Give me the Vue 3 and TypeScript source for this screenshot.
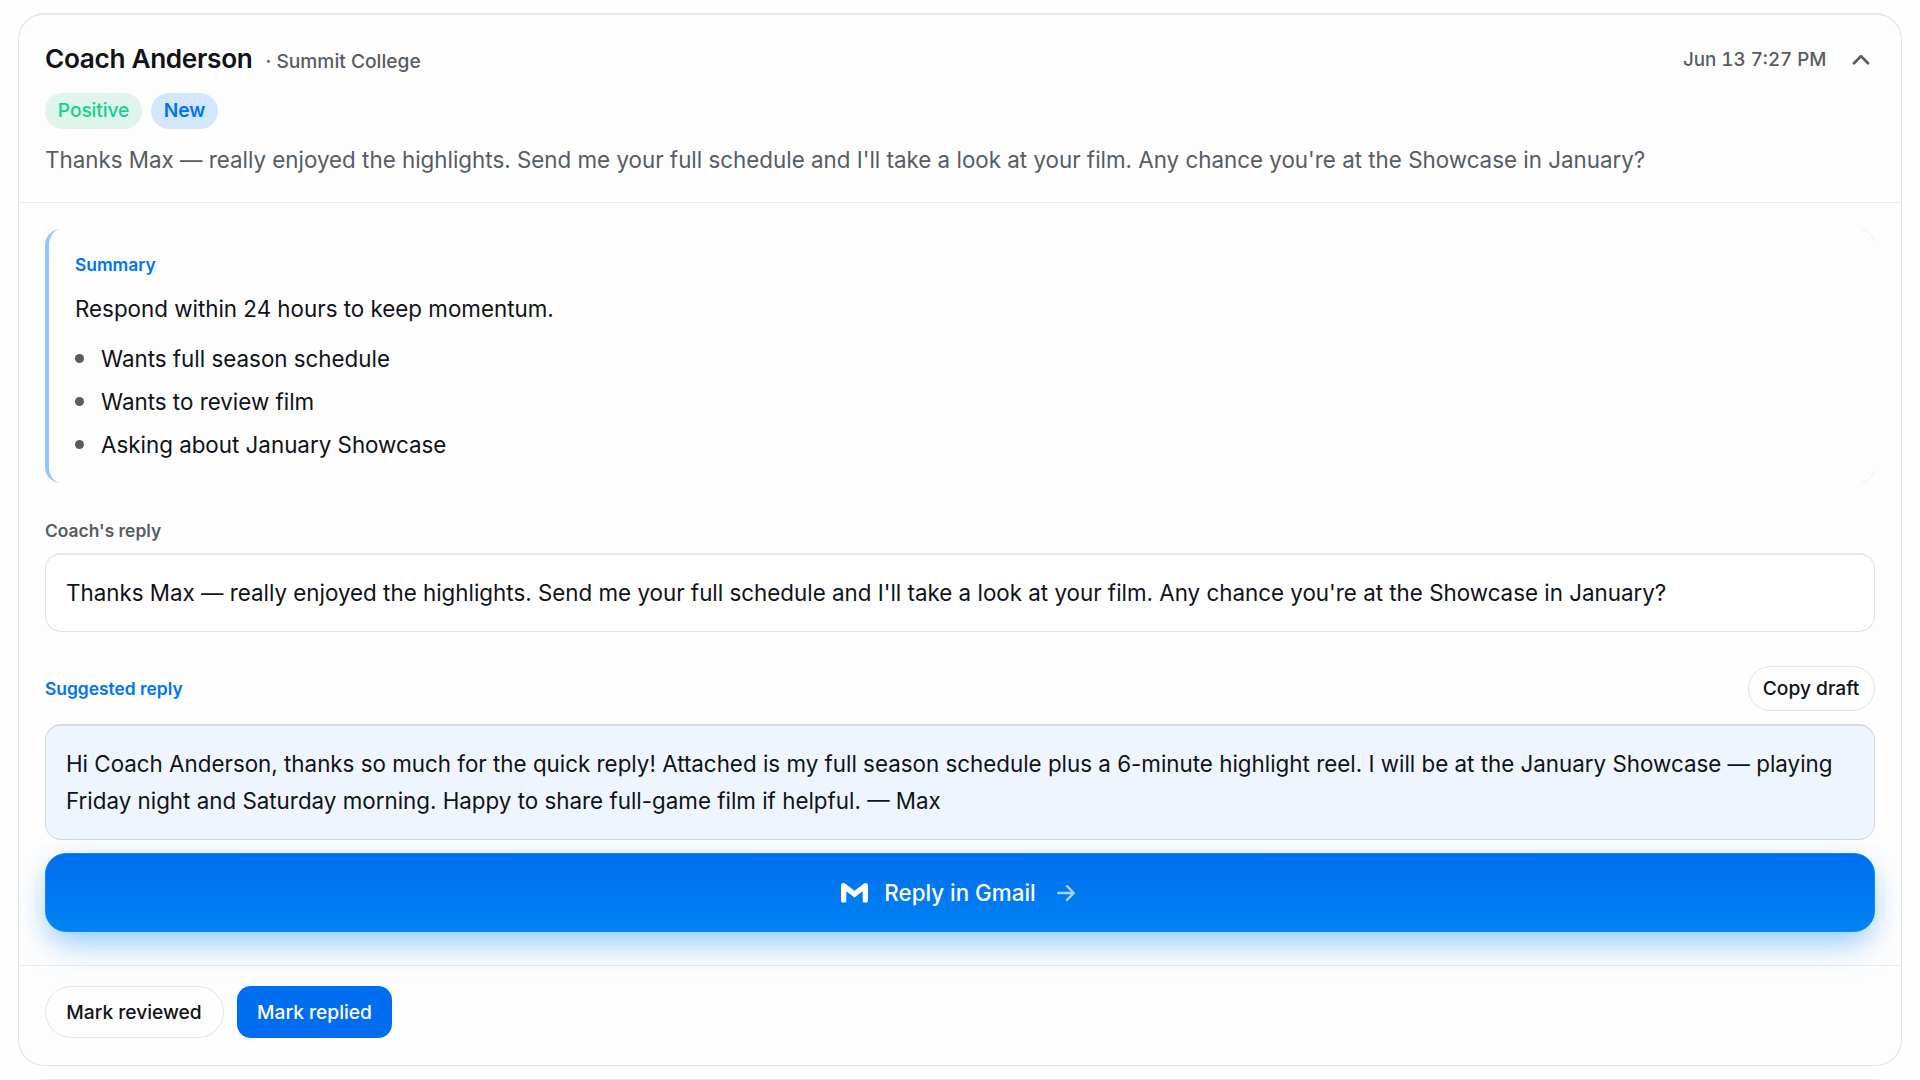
<script setup lang="ts">
interface Badge { label: string; tone: string }
const message = "Thanks Max — really enjoyed the highlights. Send me your full schedule and I'll take a look at your film. Any chance you're at the Showcase in January?"
const badges: Badge[] = [
  { label: 'Positive', tone: 'positive' },
  { label: 'New', tone: 'new' },
]
const points: string[] = ['Wants full season schedule', 'Wants to review film', 'Asking about January Showcase']
</script>

<template>
  <main class="page">
    <article class="card">
      <header class="head">
        <div class="title-row">
          <h2 class="name">Coach Anderson</h2>
          <span class="school">· Summit College</span>
          <time class="time">Jun 13 7:27 PM</time>
          <svg class="chevron" viewBox="0 0 28 28" fill="none" stroke="currentColor" stroke-width="2.7" stroke-linecap="round" stroke-linejoin="round"><path d="m7 17.2 7-7.1 7 7.1" /></svg>
        </div>
        <div class="badges">
          <span v-for="b in badges" :key="b.label" class="badge" :class="b.tone">{{ b.label }}</span>
        </div>
        <p class="preview">{{ message }}</p>
      </header>
      <section class="body">
        <div class="summary">
          <h3 class="label blue">Summary</h3>
          <p class="lead">Respond within 24 hours to keep momentum.</p>
          <ul class="points">
            <li v-for="p in points" :key="p"><i class="dot"></i><span>{{ p }}</span></li>
          </ul>
          <svg class="arc top" viewBox="0 0 14 13" fill="none"><path d="M0 .5A15.5 15.5 0 0 1 13.3 12.5" stroke="#e6f2fe" /></svg>
          <svg class="arc bottom" viewBox="0 0 14 13" fill="none"><path d="M0 12.5A15.5 15.5 0 0 0 13.3 .5" stroke="#e6f2fe" /></svg>
        </div>
        <h3 class="label reply-label">Coach's reply</h3>
        <div class="box"><p>{{ message }}</p></div>
        <div class="suggest-row">
          <h3 class="label blue">Suggested reply</h3>
          <button class="pill copy">Copy draft</button>
        </div>
        <div class="box draft">
          <p>Hi Coach Anderson, thanks so much for the quick reply! Attached is my full season schedule plus a 6-minute highlight reel. I will be at the January Showcase — playing Friday night and Saturday morning. Happy to share full-game film if helpful. — Max</p>
        </div>
        <button class="gmail">
          <svg class="gmail-icon" viewBox="0 0 27 20" fill="#fff"><path d="M2.4 0C3.1 0 3.7.3 4.3.8L13.5 7.7 22.7.8C23.3.3 23.9 0 24.6 0 26 0 27 1 27 2.4V17.8C27 19 26.4 19.6 25.2 19.6H23.4C22.3 19.6 21.7 19 21.7 17.9V8.2L13.5 14.5 5.3 8.2V17.9C5.3 19 4.7 19.6 3.6 19.6H1.8C.6 19.6 0 19 0 17.8V2.4C0 1 1 0 2.4 0Z" /></svg>
          <span>Reply in Gmail</span>
          <svg class="arrow" viewBox="0 0 18 16" fill="none" stroke="currentColor" stroke-width="2.4" stroke-linecap="round" stroke-linejoin="round"><path d="M1.2 8H16.8M10 1.2l6.8 6.8-6.8 6.8" /></svg>
        </button>
      </section>
      <footer class="foot">
        <button class="pill reviewed">Mark reviewed</button>
        <button class="replied">Mark replied</button>
      </footer>
    </article>
    <div class="card next"></div>
  </main>
</template>

<style>
html, body { margin: 0; background: #fefefe; }
body { overflow: hidden; }
</style>

<style scoped>
* { box-sizing: border-box; }
.page { height: 1080px; overflow: hidden; padding: 13px 18px 0 18px; font-family: Inter, "Liberation Sans", sans-serif; color: #101318; font-size: 22.37px; }
h2, h3, p, ul { margin: 0; padding: 0; font-weight: 400; }
button { font: inherit; margin: 0; padding: 0; }
.card { height: 1053px; border: 1px solid #e2e3e4; border-top: 2px solid #e6e7e8; border-radius: 26px; background: #fdfdfd; }
.next { height: 100px; margin-top: 13px; }
.head { height: 188px; padding: 25px 26px 0; border-bottom: 1px solid #ebebec; color: #575c63; }
.title-row { display: flex; height: 38px; align-items: center; }
.name { font-size: 26.2px; line-height: 38px; font-weight: 600; letter-spacing: -.33px; color: #101318; white-space: nowrap; }
.school { margin: 4px 0 0 13px; font-size: 19.2px; font-weight: 500; }
.time { margin-left: auto; font-size: 18.8px; font-weight: 500; font-variant-numeric: tabular-nums; }
.chevron { width: 28px; height: 28px; margin: 1px 0 0 20.5px; }
.badges { display: flex; gap: 9px; margin-top: 15px; }
.badge { height: 36px; line-height: 34px; padding: 0 12.8px; border-radius: 18px; font-size: 19.2px; letter-spacing: -.1px; font-weight: 500; }
.positive { color: #13d18d; background: #dff4ea; }
.new { color: #0074f0; background: #d3e7fc; font-weight: 600; }
.preview { margin-top: 12px; line-height: 37px; white-space: nowrap; }
.body { height: 762px; padding: 26px 26px 0; display: flex; flex-direction: column; }
.summary { position: relative; height: 254px; border-left: 4px solid #90c7fd; border-radius: 16px; padding: 22px 26px 0; flex-shrink: 0; }
.label { font-size: 17.4px; line-height: 28px; font-weight: 600; color: #575c63; }
.blue { color: #0074f0; }
.lead { margin-top: 11px; line-height: 37px; }
.points { list-style: none; margin-top: 13px; display: flex; flex-direction: column; gap: 6px; }
.points li { display: flex; align-items: center; line-height: 37px; }
.dot { width: 9px; height: 9px; border-radius: 50%; background: #575c63; margin-right: 17px; }
.arc { position: absolute; right: 0; width: 14px; height: 13px; }
.top { top: 0; }
.bottom { bottom: 0; }
.reply-label { margin-top: 34px; }
.box { margin-top: 8px; height: 79px; padding: 19px 20px; border: 1px solid #e0e1e3; border-top: 2px solid #e6e7e9; border-radius: 16px; background: #fff; line-height: 37px; flex-shrink: 0; }
.suggest-row { display: flex; justify-content: space-between; align-items: center; height: 45px; margin-top: 34px; }
.pill { border: 1px solid #e2e3e4; background: #fdfdfd; color: #101318; border-radius: 26px; font-size: 19.2px; font-weight: 500; }
.copy { width: 127px; height: 45px; padding: 0 1px 1px 0; }
.draft { margin-top: 13px; height: 116px; background: #eef5fe; border-color: #d3dbe4; }
.gmail { margin-top: 13px; height: 79px; flex-shrink: 0; border: 1px solid #0a8af8; border-radius: 21px; background: linear-gradient(#006eee, #0083f2); box-shadow: 0 17px 34px -7px rgba(0, 132, 245, .4), 0 3px 22px rgba(0, 132, 245, .12); color: #fff; font-weight: 500; display: flex; justify-content: center; align-items: center; padding-right: 4px; }
.gmail-icon { width: 27px; height: 20px; margin-right: 16px; }
.arrow { width: 18px; height: 16px; margin-left: 21px; color: #a6d3fc; }
.foot { border-top: 1px solid #e8ecef; padding: 20px 26px; display: flex; gap: 13px; }
.reviewed { width: 179px; height: 52px; padding-right: 1px; }
.replied { width: 155px; height: 52px; border: 0; border-radius: 14px; background: #006eee; color: #fff; font-size: 19.2px; font-weight: 500; }
</style>
